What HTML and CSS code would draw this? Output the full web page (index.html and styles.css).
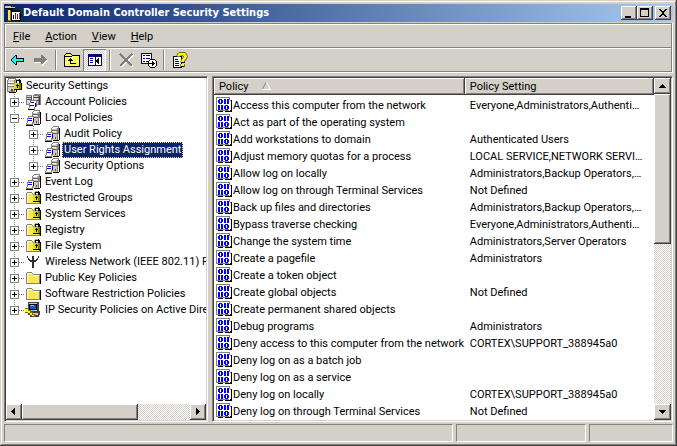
FILE: index.html
```html
<!DOCTYPE html>
<html lang="en">
<head>
<meta charset="utf-8">
<title>Default Domain Controller Security Settings</title>
<link rel="stylesheet" href="styles.css">
</head>
<body>
<svg class="defs" aria-hidden="true">
  <defs>
    <symbol id="lock" viewBox="0 0 16 16">
      <path fill="#000" d="M8 5h8v7H8zM9 2h1V1h4v1h1v3h-2V3h-2v2H9z"/>
      <path fill="#808000" d="M9 5h6v6H9z"/><path fill="#e0d820" d="M8 5h5v6H8z"/>
      <path fill="#c8c020" d="M9 2h1v3H9zM10 1h3v1h-3z"/><path fill="#000" d="M11 6h1v4h-1zM10 7h3v1h-3z"/>
    </symbol>
    <symbol id="folder" viewBox="0 0 16 16">
      <path fill="#000" d="M2 14h14V4h-1v9H2z"/>
      <path fill="#808080" d="M2 2h5v1h1v1h7v10H1V3h1z"/>
      <path fill="#f6ea50" d="M2 3h5v1h1v1h6v8H2z"/><path fill="#fff" d="M2 3h4v1H2zM2 4h1v9H2zM8 5h6v1H8z"/>
    </symbol>
    <symbol id="lockfolder" viewBox="0 0 16 16">
      <use href="#folder" width="16" height="16"/><use href="#lock" width="16" height="16"/>
    </symbol>
    <symbol id="tower" viewBox="0 0 16 16">
      <path fill="#000" d="M9 15h6v-1h1V2h-1v12H9z"/>
      <path fill="#808080" d="M7 2h1V1h1V0h6v2l-1 12H7z"/>
      <path fill="#c8c8c8" d="M8 2h5v12H8z"/><path fill="#fff" d="M8 2h4v1H8zM8 5h4v1H8zM9 1h5v1H9z"/>
      <path fill="#606060" d="M8 4h5v1H8zM8 7h5v1H8z"/><path fill="#f00" d="M11 11h1v2h-1z"/>
    </symbol>
    <symbol id="server" viewBox="0 0 16 16">
      <use href="#tower" width="16" height="16"/>
      <path fill="#808080" d="M3 6h6v7H8v2H1v-2h1V8h1z"/>
      <path fill="#fff" d="M4 7h4v5H7v2H2v-1h1V9h1z"/>
      <path fill="#00f" d="M4 8h3v1H4zM3 10h4v1H3z"/><path fill="#000" d="M1 15h7v1H1zM8 8h1v4H8z"/>
    </symbol>
    <symbol id="servers" viewBox="0 0 16 16">
      <path fill="#808080" d="M1 1h6v10H1z"/><path fill="#d8d8d8" d="M2 2h4v8H2z"/><path fill="#505050" d="M2 3h4v1H2zM2 5h4v1H2zM6 2h1v8H6z"/>
      <path fill="#808080" d="M8 1h1V0h7v11H8z"/><path fill="#d8d8d8" d="M9 2h4v8H9z"/><path fill="#404040" d="M9 3h5v1H9zM9 6h5v1H9zM14 2h1v9h-1z"/>
      <path fill="#808080" d="M5 6h7v7h-2v3H3v-2h1V9h1z"/><path fill="#fff" d="M6 7h5v6H9v2H4v-1h1V9h1z"/>
      <path fill="#00f" d="M6 8h3v1H6zM5 11h4v1H5z"/><path fill="#000" d="M10 9h1v4h-1zM3 15h6v1H3z"/>
    </symbol>
    <symbol id="root" viewBox="0 0 16 16">
      <path fill="#000" d="M3 15h7v-1h1V2h-1v12H3z"/><path fill="#808080" d="M1 2h1V0h8v2L9 14H1z"/>
      <path fill="#d4d0c8" d="M2 2h6v11H2z"/><path fill="#fff" d="M3 1h6v1H3zM2 4h6v1H2zM2 7h6v1H2z"/><path fill="#808080" d="M2 5h6v1H2zM2 8h6v1H2z"/>
      <path fill="#f00" d="M5 11h2v2H5z"/><use href="#lock" width="16" height="16"/>
    </symbol>
    <symbol id="antenna" viewBox="0 0 16 16">
      <path fill="#303030" d="M2 2h1v2h1v1h1v1h2V2h2v4h2V5h1V4h1V2h1v2h-1v2h-1v1h-1v1H9v6H7V8H5V7H4V6H3V4H2z"/>
    </symbol>
    <symbol id="ipsec" viewBox="0 0 16 16">
      <path fill="#404040" d="M3 0h11v9h1v4h-1v2H5v-2H3z"/><path fill="#c8c8c8" d="M4 1h8v8H4zM6 11h7v2H6z"/>
      <path fill="#000" d="M4 2h8v6H4z"/><path fill="#0060e0" d="M5 3h6v4H5z"/><path fill="#80c0ff" d="M5 3h4v1H5z"/>
      <path fill="#807000" d="M0 6h4v2h2v2h2v2h2v3H8v-1H6v-2H4v-1H0z"/><path fill="#ff0" d="M0 7h3v2h2v2h2v2h2v1H7v-1H5v-2H3v-1H0z"/>
    </symbol>
    <symbol id="policy" viewBox="0 0 16 16">
      <path fill="#000" d="M2 14h5v1H2zM9 14h5v-1h1V3h1v12H9z"/><path fill="#808080" d="M0 0h14v1H0zM0 0h1v14H0zM13 1h1v2h1v1h-2zM1 13h12v1H1z"/>
      <path fill="#fff" d="M1 1h12v2h1v10H1z"/>
      <path fill="#00f" fill-rule="evenodd" d="M3 2h3v1h1v3H6v1H3V6H2V3h1zM4 3v3h1V3zM9 8h3v1h1v3h-1v1H9v-1H8V9h1zM10 9v3h1V9z"/>
      <path fill="#00f" d="M8 2h2v5H8zM11 2h2v5h-2zM2 8h2v5H2zM5 8h2v5H5z"/>
    </symbol>
    <symbol id="app" viewBox="0 0 16 16">
      <path fill="#000" d="M6 5h10v11H6z"/><path fill="#fff" d="M7 6h8v9H7z"/><path fill="#000080" d="M7 6h8v1H7zM8 10h1v4H8z"/><path fill="#a00020" d="M10 8h1v6h-1zM12 9h1v5h-1z"/><path fill="#606060" d="M14 8h1v6h-1z"/>
      <path fill="#000" d="M0 1h7v1h3v2H8v1H3V4H0z"/><path fill="#c8c8c8" d="M0 1h6v2H0zM6 2h4v1H6z"/><path fill="#808000" d="M3 5h3v11H3z"/><path fill="#ffe060" d="M3 5h2v10H3z"/>
    </symbol>
    <symbol id="back" viewBox="0 0 16 16">
      <path fill="#000" d="M1 7h1V6h1V5h1V4h1V3h2v3h7v4H7v3H5v-1H4v-1H3v-1H2V9H1z"/><path fill="#0ff" d="M2 8V7h1V6h1V5h1V4h1v3h7v2H6v3H5v-1H4v-1H3V9H2z"/>
    </symbol>
    <symbol id="forward" viewBox="0 0 16 16">
      <path fill="#fff" d="M2 7h7V4h2v1h1v1h1v1h1v1h1v1h-1v1h-1v1h-1v1h-1v2H9v-3H2z"/>
      <path fill="#808080" d="M1 6h7V3h2v1h1v1h1v1h1v1h1v1h-1v1h-1v1h-1v1h-1v1H8v-2H1z"/>
    </symbol>
    <symbol id="up" viewBox="0 0 16 16">
      <path fill="#000" d="M2 1h5v1h1v1h8v12H0V3h1V2h1z"/><path fill="#ffff60" d="M2 2h5v1h1v1h7v10H1V3h1z"/><path fill="#000" d="M1 4h7v1H1zM6 6h1v1h1v1h1v1H7v2h5v1H6V9H4V8h1V7h1z"/>
    </symbol>
    <symbol id="panes" viewBox="0 0 16 16">
      <path fill="#000080" d="M1 2h14v12H1z"/><path fill="#fff" d="M2 5h6v8H2zM9 5h5v8H9z"/><path fill="#0000a0" d="M3 6h3v1H3zM3 8h3v1H3zM3 10h3v1H3z"/><path fill="#000" d="M12 6v6h-1v-1h-1v-1H9V8h1V7h1V6z"/>
    </symbol>
    <symbol id="cross" viewBox="0 0 16 16">
      <path fill="none" stroke="#fff" stroke-width="2" d="M3 3l12 12M15 3L3 15"/><path fill="none" stroke="#808080" stroke-width="2" d="M2 2l12 12M14 2L2 14"/>
    </symbol>
    <symbol id="export" viewBox="0 0 16 16">
      <path fill="#000060" d="M0 1h11v11H0z"/><path fill="#fff" d="M1 2h9v9H1z"/><path fill="#000080" d="M2 3h2v1H2zM5 3h4v1H5zM2 6h2v1H2zM5 6h4v1H5zM2 9h2v1H2zM5 9h4v1H5z"/>
      <path fill="#000" d="M9 7h5v1h1v1h1v5h-1v1h-1v1H9v-1H8v-1H7V9h1V8h1z"/><path fill="#fff" d="M9 8h5v1h1v5h-1v1H9v-1H8V9h1z"/><path fill="#000" d="M8 11h3V9h1v1h1v1h1v1h-1v1h-1v1h-1v-2H8z"/>
    </symbol>
    <symbol id="help" viewBox="0 0 16 16">
      <path fill="#000" d="M1 4h9v12H1z"/><path fill="#fff" d="M2 5h7v10H2z"/><path fill="#000080" d="M3 7h3v1H3zM3 9h4v1H3zM3 11h4v1H3zM3 13h4v1H3z"/>
      <path fill="none" stroke="#000" stroke-width="4" d="M6.500 5c0-4 7-4 7-.5 0 2.500-3 2.500-3 6M10.500 12v3"/>
      <path fill="none" stroke="#ff0" stroke-width="3" d="M6.500 4.500c0-3.500 7-3.500 7 0 0 2.500-3 2.500-3 5.500M10.500 12v2"/>
      <path fill="#000" d="M9 10h4v1H9z"/>
    </symbol>
  </defs>
</svg>

<main class="window">
  <header class="titlebar">
    <svg class="icon"><use href="#app"/></svg>
    <h1>Default Domain Controller Security Settings</h1>
    <div class="controls">
      <button aria-label="Minimize"><svg viewBox="0 0 10 10"><path d="M1 8h6v2H1z"/></svg></button>
      <button aria-label="Maximize"><svg viewBox="0 0 10 10"><path fill-rule="evenodd" d="M0 0h9v9H0zM1 2v6h7V2z"/></svg></button>
      <button class="close" aria-label="Close"><svg viewBox="0 0 10 10"><path d="M1 1h2v1h1v1h2V2h1V1h2v1H8v1H7v1H6v2h1v1h1v1h1v1H7V8H6V7H4v1H3v1H1V8h1V7h1V6h1V4H3V3H2V2H1z"/></svg></button>
    </div>
  </header>

  <nav class="menubar">
    <button><u>F</u>ile</button><button><u>A</u>ction</button><button><u>V</u>iew</button><button><u>H</u>elp</button>
  </nav>

  <div class="toolbar">
    <button aria-label="Back"><svg class="icon"><use href="#back"/></svg></button>
    <button aria-label="Forward" disabled><svg class="icon"><use href="#forward"/></svg></button>
    <span class="sep"></span>
    <button aria-label="Up one level"><svg class="icon"><use href="#up"/></svg></button>
    <button class="pressed" aria-label="Show or hide console tree" aria-pressed="true"><svg class="icon"><use href="#panes"/></svg></button>
    <span class="sep"></span>
    <button aria-label="Delete" disabled><svg class="icon"><use href="#cross"/></svg></button>
    <button aria-label="Export list"><svg class="icon"><use href="#export"/></svg></button>
    <span class="sep"></span>
    <button aria-label="Help"><svg class="icon smooth"><use href="#help"/></svg></button>
  </div>

  <div class="panes">
    <section class="pane tree-pane">
      <div class="tree">
        <div class="node root"><svg class="icon"><use href="#root"/></svg><span class="label">Security Settings</span></div>
        <ul>
          <li><div class="node"><button class="toggle" aria-label="Expand"></button><svg class="icon"><use href="#servers"/></svg><span class="label">Account Policies</span></div></li>
          <li><div class="node"><button class="toggle open" aria-label="Collapse"></button><svg class="icon"><use href="#server"/></svg><span class="label">Local Policies</span></div>
            <ul>
              <li><div class="node"><button class="toggle" aria-label="Expand"></button><svg class="icon"><use href="#server"/></svg><span class="label">Audit Policy</span></div></li>
              <li><div class="node"><button class="toggle" aria-label="Expand"></button><svg class="icon"><use href="#server"/></svg><span class="label selected">User Rights Assignment</span></div></li>
              <li><div class="node"><button class="toggle" aria-label="Expand"></button><svg class="icon"><use href="#server"/></svg><span class="label">Security Options</span></div></li>
            </ul>
          </li>
          <li><div class="node"><button class="toggle" aria-label="Expand"></button><svg class="icon"><use href="#server"/></svg><span class="label">Event Log</span></div></li>
          <li><div class="node"><button class="toggle" aria-label="Expand"></button><svg class="icon"><use href="#lockfolder"/></svg><span class="label">Restricted Groups</span></div></li>
          <li><div class="node"><button class="toggle" aria-label="Expand"></button><svg class="icon"><use href="#lockfolder"/></svg><span class="label">System Services</span></div></li>
          <li><div class="node"><button class="toggle" aria-label="Expand"></button><svg class="icon"><use href="#lockfolder"/></svg><span class="label">Registry</span></div></li>
          <li><div class="node"><button class="toggle" aria-label="Expand"></button><svg class="icon"><use href="#lockfolder"/></svg><span class="label">File System</span></div></li>
          <li><div class="node"><button class="toggle" aria-label="Expand"></button><svg class="icon"><use href="#antenna"/></svg><span class="label">Wireless Network (IEEE 802.11) Policies</span></div></li>
          <li><div class="node"><button class="toggle" aria-label="Expand"></button><svg class="icon"><use href="#folder"/></svg><span class="label">Public Key Policies</span></div></li>
          <li><div class="node"><button class="toggle" aria-label="Expand"></button><svg class="icon"><use href="#folder"/></svg><span class="label">Software Restriction Policies</span></div></li>
          <li><div class="node"><button class="toggle" aria-label="Expand"></button><svg class="icon"><use href="#ipsec"/></svg><span class="label">IP Security Policies on Active Directory</span></div></li>
        </ul>
      </div>
      <div class="scroll horizontal">
        <button aria-label="Scroll left"><svg viewBox="0 0 8 8"><path d="M5 0v7H4V6H3V5H2V4H1V3h1V2h1V1h1V0z"/></svg></button>
        <span class="thumb"></span><span class="track"></span>
        <button aria-label="Scroll right"><svg viewBox="0 0 8 8"><path d="M2 0v7h1V6h1V5h1V4h1V3H5V2H4V1H3V0z"/></svg></button>
      </div>
    </section>

    <section class="pane list-pane">
      <div class="list">
        <table>
          <thead><tr><th class="name">Policy<svg class="sort" viewBox="0 0 9 8"><path fill="none" stroke="#808080" d="M.5 7L4 .5"/><path fill="none" stroke="#fff" d="M4.500 .5L8.500 7.500H0"/></svg></th><th>Policy Setting</th></tr></thead>
          <tbody>
            <tr><td><svg class="icon"><use href="#policy"/></svg>Access this computer from the network</td><td>Everyone,Administrators,Authenticated Users</td></tr>
            <tr><td><svg class="icon"><use href="#policy"/></svg>Act as part of the operating system</td><td></td></tr>
            <tr><td><svg class="icon"><use href="#policy"/></svg>Add workstations to domain</td><td>Authenticated Users</td></tr>
            <tr><td><svg class="icon"><use href="#policy"/></svg>Adjust memory quotas for a process</td><td>LOCAL SERVICE,NETWORK SERVICE,Administrators</td></tr>
            <tr><td><svg class="icon"><use href="#policy"/></svg>Allow log on locally</td><td>Administrators,Backup Operators,Account Operators</td></tr>
            <tr><td><svg class="icon"><use href="#policy"/></svg>Allow log on through Terminal Services</td><td>Not Defined</td></tr>
            <tr><td><svg class="icon"><use href="#policy"/></svg>Back up files and directories</td><td>Administrators,Backup Operators,Server Operators</td></tr>
            <tr><td><svg class="icon"><use href="#policy"/></svg>Bypass traverse checking</td><td>Everyone,Administrators,Authenticated Users</td></tr>
            <tr><td><svg class="icon"><use href="#policy"/></svg>Change the system time</td><td>Administrators,Server Operators</td></tr>
            <tr><td><svg class="icon"><use href="#policy"/></svg>Create a pagefile</td><td>Administrators</td></tr>
            <tr><td><svg class="icon"><use href="#policy"/></svg>Create a token object</td><td></td></tr>
            <tr><td><svg class="icon"><use href="#policy"/></svg>Create global objects</td><td>Not Defined</td></tr>
            <tr><td><svg class="icon"><use href="#policy"/></svg>Create permanent shared objects</td><td></td></tr>
            <tr><td><svg class="icon"><use href="#policy"/></svg>Debug programs</td><td>Administrators</td></tr>
            <tr><td><svg class="icon"><use href="#policy"/></svg>Deny access to this computer from the network</td><td>CORTEX\SUPPORT_388945a0</td></tr>
            <tr><td><svg class="icon"><use href="#policy"/></svg>Deny log on as a batch job</td><td></td></tr>
            <tr><td><svg class="icon"><use href="#policy"/></svg>Deny log on as a service</td><td></td></tr>
            <tr><td><svg class="icon"><use href="#policy"/></svg>Deny log on locally</td><td>CORTEX\SUPPORT_388945a0</td></tr>
            <tr><td><svg class="icon"><use href="#policy"/></svg>Deny log on through Terminal Services</td><td>Not Defined</td></tr>
          </tbody>
        </table>
      </div>
      <div class="scroll vertical">
        <button aria-label="Scroll up"><svg viewBox="0 0 8 8"><path d="M0 6h7V5H6V4H5V3H4V2H3v1H2v1H1v1H0z"/></svg></button>
        <span class="thumb"></span><span class="track"></span>
        <button aria-label="Scroll down"><svg viewBox="0 0 8 8"><path d="M0 2h7v1H6v1H5v1H4v1H3V5H2V4H1V3H0z"/></svg></button>
      </div>
    </section>
  </div>

  <footer class="status"><span></span><span></span><span></span></footer>
</main>
</body>
</html>
```
FILE: styles.css
```css
:root {
  --face: #d4d0c8;
  --shadow: #808080;
  --dark: #404040;
}

* { box-sizing: border-box; }

body {
  margin: 0;
  background: var(--face);
  color: #000;
  font: 11px/16px Tahoma, Roboto, "DejaVu Sans Condensed", sans-serif;
}

button {
  padding: 0;
  border: 0;
  background: none;
  color: inherit;
  font: inherit;
}

ul { list-style: none; margin: 0; padding: 0; }

.defs { position: absolute; width: 0; height: 0; }

.icon {
  flex: none;
  width: 16px;
  height: 16px;
  shape-rendering: crispEdges;
}

.smooth { shape-rendering: auto; }

.window {
  display: flex;
  flex-direction: column;
  height: 100vh;
  padding: 4px;
  background: var(--face);
  box-shadow: inset -1px -1px var(--dark), inset 1px 1px var(--face), inset -2px -2px var(--shadow), inset 2px 2px #fff;
}

.titlebar {
  display: flex;
  flex: none;
  align-items: center;
  gap: 2px;
  height: 18px;
  margin-bottom: 1px;
  padding: 0 2px 0 1px;
  background: linear-gradient(90deg, #0a246a, #a6caf0);
  color: #fff;
}

.titlebar h1 {
  flex: 1;
  margin: 0;
  font-family: Tahoma, "DejaVu Sans Condensed", sans-serif;
  font-size: 11px;
  line-height: 18px;
  white-space: nowrap;
}

.controls { display: flex; }

.controls button,
.scroll button,
.thumb {
  display: flex;
  align-items: center;
  justify-content: center;
  background: var(--face);
  box-shadow: inset -1px -1px var(--dark), inset 1px 1px #fff, inset -2px -2px var(--shadow);
}

.controls button { width: 16px; height: 14px; }
.controls .close { margin-left: 2px; }
.controls svg { width: 10px; height: 10px; shape-rendering: crispEdges; }

.menubar,
.toolbar {
  display: flex;
  flex: none;
  align-items: center;
  border: 1px solid var(--shadow);
  border-width: 1px 1px 0 1px;
  box-shadow: inset 1px 1px #fff, 1px 0 #fff;
  margin-right: 1px;
}

.menubar { height: 24px; gap: 15px; padding: 2px 8px 0; }

.toolbar { height: 25px; padding-left: 1px; border-bottom-width: 1px; }
.toolbar button {
  display: flex;
  align-items: center;
  justify-content: center;
  width: 23px;
  height: 22px;
}
.toolbar .pressed {
  background: repeating-conic-gradient(#fff 0 25%, var(--face) 0 50%) 0 0 / 2px 2px;
  box-shadow: inset 1px 1px var(--shadow), inset -1px -1px #fff;
}

.sep {
  width: 2px;
  height: 20px;
  margin: 0 3px;
  border-left: 1px solid var(--shadow);
  border-right: 1px solid #fff;
}

.panes {
  display: grid;
  grid-template-columns: 204fr 461fr;
  flex: 1;
  gap: 4px;
  min-height: 0;
  padding-top: 3px;
  border-top: 1px solid #fff;
}

.pane {
  display: flex;
  min-width: 0;
  min-height: 0;
  background: #fff;
  border: 1px solid;
  border-color: var(--shadow) #fff #fff var(--shadow);
  box-shadow: inset 1px 1px var(--dark), inset -1px -1px var(--face);
  padding: 1px;
}

.tree-pane { flex-direction: column; }

.tree { flex: 1; min-height: 0; overflow: hidden; }
.tree > ul { padding-left: 4px; }
.tree ul ul { margin-left: 19px; }

.tree li {
  background: repeating-linear-gradient(var(--shadow) 0 1px, transparent 1px 2px) 4px 0 / 1px 100% no-repeat;
}
.tree li:last-child { background-size: 1px 8px; }

.node {
  display: flex;
  align-items: center;
  height: 16px;
  white-space: nowrap;
  background: repeating-linear-gradient(90deg, var(--shadow) 0 1px, transparent 1px 2px) 9px 8px / 6px 1px no-repeat;
}
.root { background: none; }

.toggle {
  flex: none;
  width: 9px;
  height: 9px;
  margin-right: 6px;
  border: 1px solid var(--shadow);
  background:
    linear-gradient(#000, #000) center / 5px 1px no-repeat,
    linear-gradient(#000, #000) center / 1px 5px no-repeat,
    #fff;
}
.toggle.open { background: linear-gradient(#000, #000) center / 5px 1px no-repeat, #fff; }

.label { margin-left: 2px; padding: 0 2px; }
.selected {
  background: #0a246a;
  color: #fff;
  outline: 1px dotted #f5db95;
  outline-offset: -1px;
}

.scroll { display: flex; flex: none; }
.scroll button { flex: none; width: 16px; height: 16px; }
.scroll svg { width: 8px; height: 8px; shape-rendering: crispEdges; }
.horizontal { height: 16px; }
.vertical { flex-direction: column; width: 17px; }
.vertical button { width: 17px; }
.track {
  flex: 1;
  background: repeating-conic-gradient(#fff 0 25%, var(--face) 0 50%) 0 0 / 2px 2px;
}
.horizontal .thumb { flex: 0 0 58%; }
.vertical .thumb { flex: 0 0 44%; }

.list { flex: 1; min-width: 0; overflow: hidden; }

table { width: 100%; table-layout: fixed; border-spacing: 0; }

th {
  height: 17px;
  padding: 0 5px;
  background: var(--face);
  box-shadow: inset -1px -1px var(--dark), inset 1px 1px #fff, inset -2px -2px var(--shadow);
  font-weight: normal;
  text-align: left;
}
.name { width: 57%; }
.sort { width: 9px; height: 8px; margin-left: 14px; }

td {
  height: 17px;
  padding: 0 10px 0 5px;
  overflow: hidden;
  line-height: 17px;
  text-overflow: ellipsis;
  white-space: nowrap;
}
td:first-child { padding: 0 0 0 2px; }
td .icon { margin-right: 1px; vertical-align: top; }
tbody::before { content: ""; display: block; height: 2px; }

.status {
  display: grid;
  grid-template-columns: 448fr 130fr 84fr;
  flex: none;
  gap: 3px;
  height: 18px;
  margin-top: 2px;
}
.status span {
  border: 1px solid;
  border-color: var(--shadow) #fff #fff var(--shadow);
}
```
